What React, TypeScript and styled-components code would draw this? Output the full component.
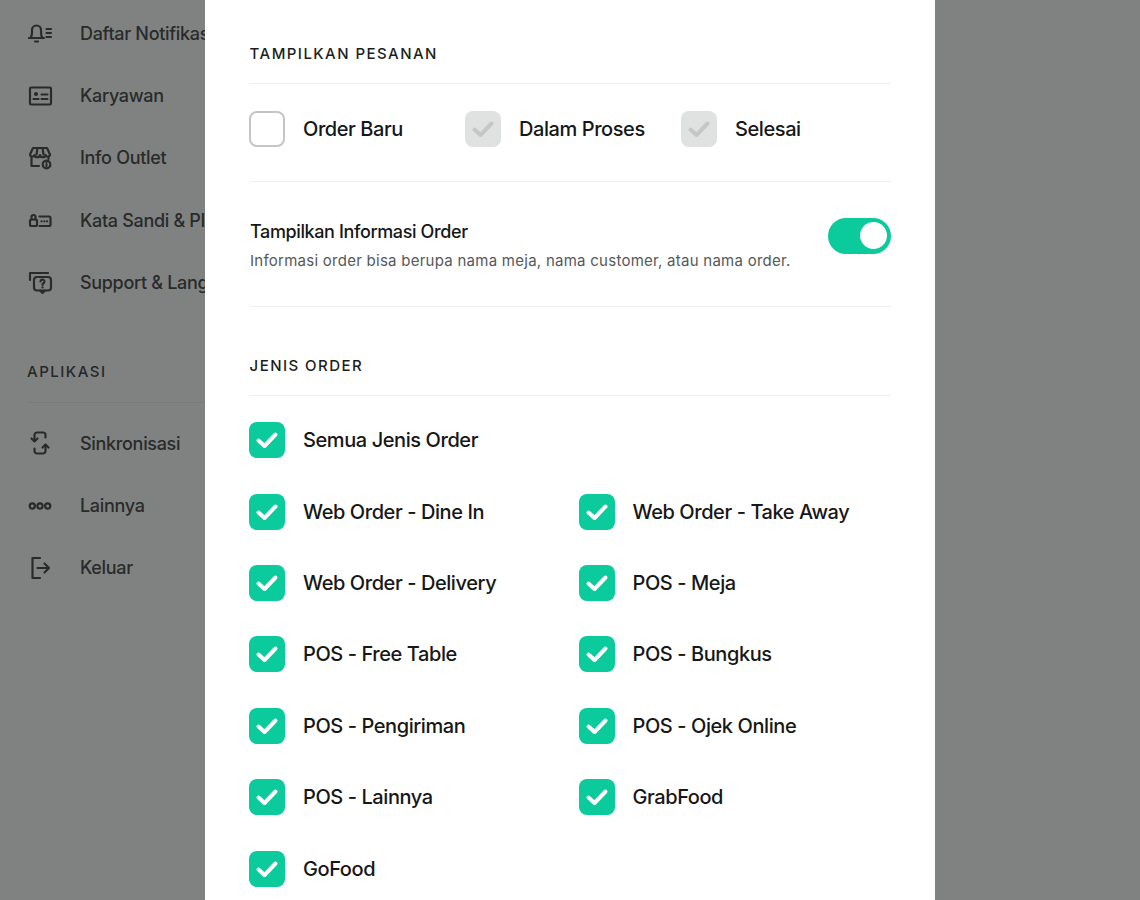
import React from 'react'
import styled, { createGlobalStyle } from 'styled-components'

const GlobalStyle = createGlobalStyle`
  html, body {
    margin: 0;
    height: 100%;
    overflow: hidden;
    background: #fff;
    font-family: Inter, "Noto Sans", sans-serif;
  }
`

const Page = styled.div`
  height: 900px;
  overflow: hidden;
  position: relative;
`

const Sidebar = styled.nav`
  width: 260px;
  padding: 2px 0 0 27px;
  box-sizing: border-box;
`

const MenuRow = styled.div`
  display: flex;
  align-items: center;
  height: 62.4px;
  color: #4f5151;
  font-size: 18px;
  font-weight: 530;
  letter-spacing: -0.32px;
  white-space: nowrap;
`

const MenuIcon = styled.svg`
  width: 26px;
  height: 26px;
  margin-right: 27px;
  flex: none;
  fill: none;
  stroke: #4f5151;
  stroke-width: 2.2;
  stroke-linecap: round;
  stroke-linejoin: round;
`

const SideHeading = styled.div`
  margin-top: 49px;
  padding-bottom: 21px;
  border-bottom: 1px solid #f0f1f1;
  color: #484a4a;
  font-size: 15px;
  line-height: 18px;
  font-weight: 500;
  letter-spacing: 1.5px;
`

const SideList = styled.div`
  margin-top: 9px;
`

const Overlay = styled.div`
  position: absolute;
  inset: 0;
  display: flex;
  justify-content: center;
  background: rgba(1, 5, 3, 0.5);
`

const Modal = styled.div`
  width: 730px;
  height: 900px;
  box-sizing: border-box;
  padding: 45px 44px 0 45px;
  background: #fff;
  overflow: hidden;
`

const SectionTitle = styled.div`
  margin-left: -0.4px;
  padding-bottom: 20px;
  border-bottom: 1px solid #eeefef;
  color: #1c1d1d;
  font-size: 15px;
  line-height: 18px;
  font-weight: 500;
  letter-spacing: 1.45px;
`

const StatusRow = styled.div`
  display: flex;
  padding: 27px 0 34px;
  border-bottom: 1px solid #eeefef;
`

const StatusItem = styled.div`
  flex: none;
  width: 216px;
`

const Option = styled.label`
  display: flex;
  align-items: center;
  gap: 17.6px;
  color: #161717;
  font-size: 20px;
  line-height: 36px;
  font-weight: 530;
  letter-spacing: -0.42px;
  white-space: nowrap;
`

const Box = styled.span<{ $variant: 'empty' | 'disabled' | 'checked' }>`
  display: flex;
  align-items: center;
  justify-content: center;
  width: 36px;
  height: 36px;
  margin-left: -0.6px;
  box-sizing: border-box;
  flex: none;
  border-radius: 8px;
  border: ${(p) => (p.$variant === 'empty' ? '2px solid #c4c6c6' : 'none')};
  background: ${(p) =>
    p.$variant === 'checked' ? '#0bca9c' : p.$variant === 'disabled' ? '#e0e2e2' : '#fff'};
`

const Tick = styled.svg<{ $muted?: boolean }>`
  width: 26px;
  height: 26px;
  fill: none;
  stroke: ${(p) => (p.$muted ? '#c4c7c6' : '#fff')};
  stroke-width: 4;
  stroke-linecap: round;
  stroke-linejoin: round;
`

const InfoRow = styled.div`
  display: flex;
  align-items: flex-start;
  justify-content: space-between;
  padding: 36px 0 32px;
  border-bottom: 1px solid #eeefef;
`

const InfoTitle = styled.div`
  margin-top: 1px;
  color: #161717;
  font-size: 18px;
  line-height: 26px;
  font-weight: 530;
  letter-spacing: -0.38px;
`

const InfoText = styled.div`
  margin-top: 3px;
  color: #565858;
  font-size: 15px;
  line-height: 26px;
  letter-spacing: 0.26px;
`

const Toggle = styled.div`
  display: flex;
  justify-content: flex-end;
  align-items: center;
  width: 63px;
  height: 35.5px;
  box-sizing: border-box;
  padding-right: 4px;
  border-radius: 18px;
  background: #0bca9c;
`

const Knob = styled.span`
  width: 27px;
  height: 27px;
  border-radius: 50%;
  background: #fff;
`

const OrderSection = styled.div`
  margin-top: 49.6px;
`

const OrderGrid = styled.div`
  display: grid;
  grid-template-columns: 329.5px 1fr;
  row-gap: 35.4px;
  margin-top: 26.6px;
`

const WideCell = styled.div`
  grid-column: 1 / -1;
`

function Check({ muted }: { muted?: boolean }) {
  return (
    <Tick viewBox="0 0 26 26" $muted={muted}>
      <path d="M4.5 13.5 L10.5 19 L21.5 7.5" />
    </Tick>
  )
}

const icons: Record<string, React.ReactNode> = {
  bell: (
    <>
      <path d="M2 18h15M3.500 18c1.200-1.500 1.500-3 1.500-5.500V10a4.500 4.500 0 0 1 9 0v2.500c0 2.500.300 4 1.500 5.500M8 21.500h3" />
      <path d="M19.500 9H24M19.500 13H24M19.500 17H24" />
    </>
  ),
  card: (
    <>
      <rect x="3" y="4.500" width="21" height="17" rx="1" />
      <circle cx="9" cy="11" r="1" />
      <path d="M6.500 16h5M14.500 11.500h6M14.500 16h6" />
    </>
  ),
  store: (
    <>
      <path d="M6 3h14l3 6.500a2.300 2.300 0 0 1-4.500.5 2.800 2.800 0 0 1-5.500 0 2.800 2.800 0 0 1-5.500 0A2.300 2.300 0 0 1 3 9.500z" />
      <path d="M4.500 12.500V21H12M21.500 12.500V14M10.500 3 9.500 9.500M15.500 3l1 6.500" />
      <circle cx="19.500" cy="19.500" r="3.800" />
      <path d="M19.500 19v2M19.500 17.500v.1" />
    </>
  ),
  lock: (
    <>
      <rect x="3" y="12.500" width="7" height="6.500" rx="1.500" />
      <path d="M4.500 12.500V10a2 2 0 0 1 4 0v2.500" />
      <path d="M12.500 9.500H22a1.500 1.500 0 0 1 1.500 1.500v6.500A1.500 1.500 0 0 1 22 19h-9.500" />
      <path d="M14.500 14.300h.1M17.300 14.300h.1M20 14.300h.1" />
    </>
  ),
  support: (
    <>
      <path d="M3 10V3h18" />
      <rect x="7" y="7" width="17" height="13.500" rx="3" />
      <path d="M13 20.500l2.500 2.500 2.500-2.500" />
      <path d="M13.500 11.500a2 2 0 1 1 3 1.800c-.7.400-1 .8-1 1.700M15.500 17.300v.1" />
    </>
  ),
  sync: (
    <>
      <path d="M7.500 11V5a2.500 2.500 0 0 1 2.500-2.500h6A2.500 2.500 0 0 1 18.500 5v2.500" />
      <path d="M4.500 8.500l3 3 3-3" />
      <path d="M18.500 15v6a2.500 2.500 0 0 1-2.500 2.500h-6A2.500 2.500 0 0 1 7.500 21v-2.500" />
      <path d="M15.500 17.500l3-3 3 3" />
    </>
  ),
  more: (
    <>
      <circle cx="5.300" cy="13" r="2.600" />
      <circle cx="13" cy="13" r="2.600" />
      <circle cx="20.700" cy="13" r="2.600" />
    </>
  ),
  exit: (
    <>
      <path d="M13 3H5.500v20H13" />
      <path d="M10.500 13H22M17.500 8.500 22 13l-4.500 4.500" />
    </>
  ),
}

function Menu({ icon, label }: { icon: string; label: string }) {
  return (
    <MenuRow>
      <MenuIcon viewBox="0 0 26 26">{icons[icon]}</MenuIcon>
      {label}
    </MenuRow>
  )
}

const orderTypes = [
  'Web Order - Dine In',
  'Web Order - Take Away',
  'Web Order - Delivery',
  'POS - Meja',
  'POS - Free Table',
  'POS - Bungkus',
  'POS - Pengiriman',
  'POS - Ojek Online',
  'POS - Lainnya',
  'GrabFood',
  'GoFood',
]

export default function App() {
  return (
    <Page>
      <GlobalStyle />
      <Sidebar>
        <Menu icon="bell" label="Daftar Notifikasi" />
        <Menu icon="card" label="Karyawan" />
        <Menu icon="store" label="Info Outlet" />
        <Menu icon="lock" label="Kata Sandi & PIN" />
        <Menu icon="support" label="Support & Langganan" />
        <SideHeading>APLIKASI</SideHeading>
        <SideList>
          <Menu icon="sync" label="Sinkronisasi" />
          <Menu icon="more" label="Lainnya" />
          <Menu icon="exit" label="Keluar" />
        </SideList>
      </Sidebar>
      <Overlay>
        <Modal>
          <SectionTitle>TAMPILKAN PESANAN</SectionTitle>
          <StatusRow>
            <StatusItem>
              <Option>
                <Box $variant="empty" />
                Order Baru
              </Option>
            </StatusItem>
            <StatusItem>
              <Option>
                <Box $variant="disabled">
                  <Check muted />
                </Box>
                Dalam Proses
              </Option>
            </StatusItem>
            <StatusItem>
              <Option>
                <Box $variant="disabled">
                  <Check muted />
                </Box>
                Selesai
              </Option>
            </StatusItem>
          </StatusRow>
          <InfoRow>
            <div>
              <InfoTitle>Tampilkan Informasi Order</InfoTitle>
              <InfoText>Informasi order bisa berupa nama meja, nama customer, atau nama order.</InfoText>
            </div>
            <Toggle>
              <Knob />
            </Toggle>
          </InfoRow>
          <OrderSection>
            <SectionTitle>JENIS ORDER</SectionTitle>
            <OrderGrid>
              <WideCell>
                <Option>
                  <Box $variant="checked">
                    <Check />
                  </Box>
                  Semua Jenis Order
                </Option>
              </WideCell>
              {orderTypes.map((name) => (
                <Option key={name}>
                  <Box $variant="checked">
                    <Check />
                  </Box>
                  {name}
                </Option>
              ))}
            </OrderGrid>
          </OrderSection>
        </Modal>
      </Overlay>
    </Page>
  )
}
